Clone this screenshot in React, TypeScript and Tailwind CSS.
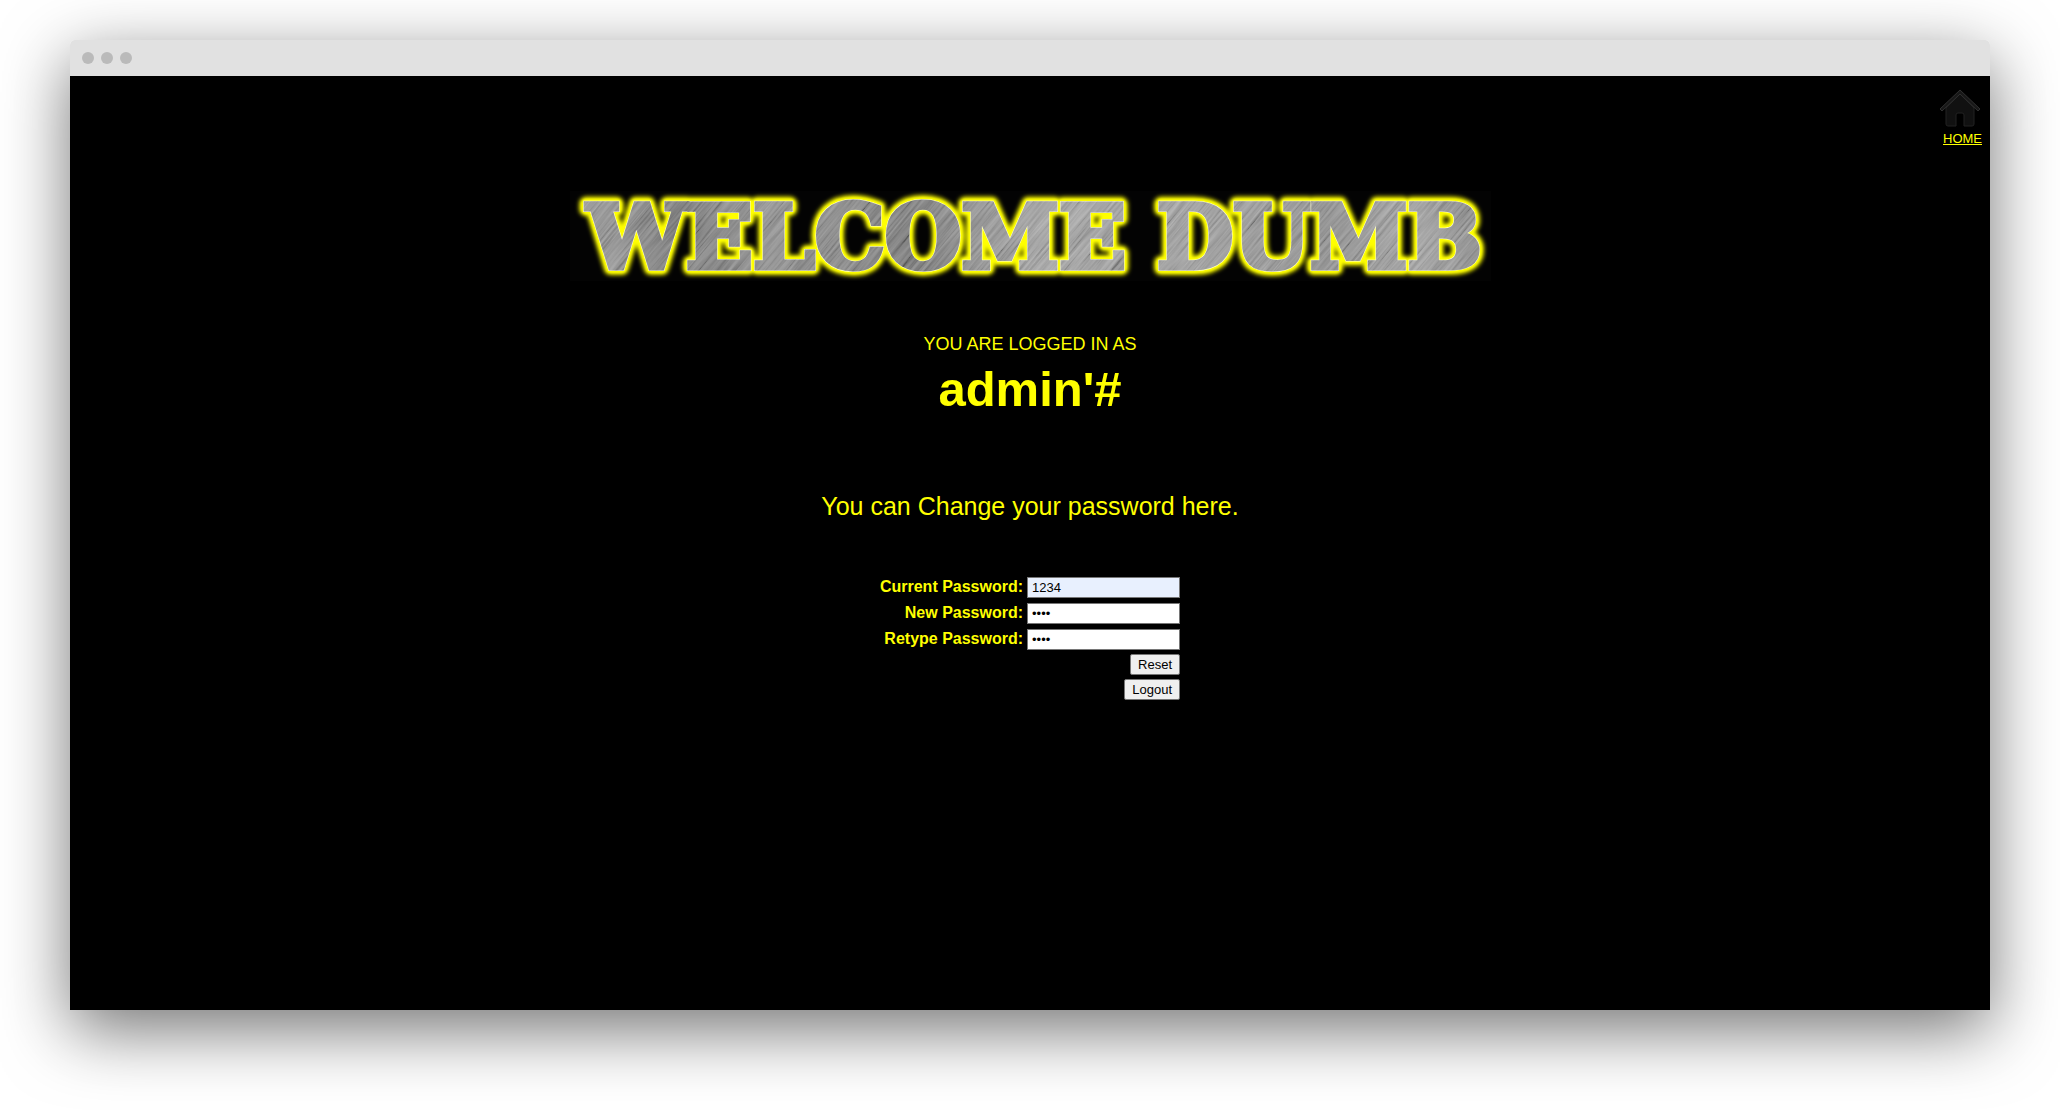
import React from "react";

const bannerFont = "font-['DejaVu_Serif'] text-[88px] leading-none font-bold";

function BannerWords() {
  return (
    <>
      <text x="17" y="77">WELCOME</text>
      <text x="587" y="77">DUMB</text>
    </>
  );
}

function Banner() {
  return (
    <h1 className="w-full max-w-[921px] bg-[#030303]">
      <svg viewBox="0 0 921 90" className={`block w-full overflow-visible ${bannerFont}`} role="img" aria-label="Welcome Dumb">
        <defs>
          <linearGradient id="steel" x1="0" y1="0" x2="1" y2="0">
            <stop offset="0" stopColor="#9a9a9a" />
            <stop offset="0.12" stopColor="#747474" />
            <stop offset="0.22" stopColor="#8c8c8c" />
            <stop offset="0.38" stopColor="#747474" />
            <stop offset="0.5" stopColor="#a2a2a2" />
            <stop offset="0.68" stopColor="#9c9c9c" />
            <stop offset="0.82" stopColor="#8a8a8a" />
            <stop offset="0.92" stopColor="#9e9e9e" />
            <stop offset="1" stopColor="#848484" />
          </linearGradient>
          <filter id="brushed" x="0" y="0" width="1" height="1">
            <feTurbulence type="fractalNoise" baseFrequency="0.015 0.45" numOctaves="3" seed="4" />
            <feColorMatrix values="1.6 0 0 0 -0.3  1.6 0 0 0 -0.3  1.6 0 0 0 -0.3  0 0 0 0 0.25" />
          </filter>
          <filter id="glowWide" x="-5%" y="-30%" width="110%" height="160%">
            <feGaussianBlur stdDeviation="2" />
          </filter>
          <filter id="glowCore" x="-5%" y="-30%" width="110%" height="160%">
            <feGaussianBlur stdDeviation="1" />
          </filter>
          <mask id="letters" maskUnits="userSpaceOnUse" x="0" y="0" width="921" height="90">
            <g fill="white" stroke="white" strokeWidth="5">
              <BannerWords />
            </g>
          </mask>
        </defs>
        <g aria-hidden="true" strokeLinejoin="round">
          <g fill="#ffff00" stroke="#ffff00" strokeWidth="14" filter="url(#glowWide)">
            <BannerWords />
          </g>
          <g fill="#ffff00" stroke="#ffff00" strokeWidth="9" filter="url(#glowCore)">
            <BannerWords />
          </g>
        </g>
        <g aria-hidden="true" fill="#ffffd0" stroke="#ffffd0" strokeWidth="6">
          <BannerWords />
        </g>
        <g mask="url(#letters)">
          <rect width="921" height="90" fill="url(#steel)" />
          <g transform="rotate(-50 460 45)">
            <rect x="-40" y="-420" width="1000" height="930" filter="url(#brushed)" />
          </g>
        </g>
      </svg>
    </h1>
  );
}

function HomeLink() {
  return (
    <a href="#" className="flex flex-col items-center text-[13px] leading-4 text-[#ffff00]">
      <svg viewBox="0 0 42 38" className="block w-[42px] h-[38px]" aria-hidden="true">
        <path d="M7 19 21 5l14 14v16q0 2-2 2h-8V26q0-2-2-2h-4q-2 0-2 2v11H9q-2 0-2-2Z" fill="#111111" stroke="#222222" />
        <path d="M1 20 21 1l20 19-2 2L21 5 3 22Z" fill="#181818" stroke="#303030" strokeLinejoin="round" />
      </svg>
      <span className="mt-1 ml-1.5 underline">HOME</span>
    </a>
  );
}

const fields = [
  { id: "current", label: "Current Password:", type: "text", tint: "bg-[#e8f0fe]" },
  { id: "new", label: "New Password:", type: "password", tint: "bg-white" },
  { id: "retype", label: "Retype Password:", type: "password", tint: "bg-white" },
];

const buttonClass =
  "block ml-auto h-[21px] rounded-[2px] border border-[#767676] bg-[#efefef] px-[7px] text-[13px] leading-4 text-black";

function PasswordForm() {
  return (
    <form onSubmit={(e) => e.preventDefault()}>
      <table className="border-collapse">
        <tbody>
          {fields.map((f) => (
            <tr key={f.id} className="h-[26px]">
              <th scope="row" className="p-0 pr-1 text-right text-base leading-5 font-bold">
                <label htmlFor={f.id}>{f.label}</label>
              </th>
              <td className="p-0">
                <input
                  id={f.id}
                  type={f.type}
                  defaultValue="1234"
                  className={`block h-[21px] w-[153px] border border-[#767676] px-1 text-[13px] leading-4 text-black outline-none ${f.tint}`}
                />
              </td>
            </tr>
          ))}
          <tr className="h-[25px]">
            <td colSpan={2} className="p-0">
              <button type="submit" className={buttonClass}>Reset</button>
            </td>
          </tr>
          <tr className="h-[25px]">
            <td colSpan={2} className="p-0">
              <button type="button" className={buttonClass}>Logout</button>
            </td>
          </tr>
        </tbody>
      </table>
    </form>
  );
}

export default function App() {
  return (
    <div className="flex min-h-screen flex-col bg-white px-[70px] pt-10 pb-[100px] font-['Liberation_Sans',sans-serif]">
      <div className="flex flex-1 flex-col overflow-hidden rounded-t-[5px] shadow-[0_20px_68px_rgba(0,0,0,0.55)]">
        <header className="flex h-9 items-center gap-[7px] bg-[#e1e1e1] px-3">
          <span className="size-3 rounded-full bg-[#bababa]" />
          <span className="size-3 rounded-full bg-[#bababa]" />
          <span className="size-3 rounded-full bg-[#bababa]" />
        </header>
        <div className="flex-1 bg-black">
          <div className="flex justify-end px-2 pt-[13px]">
            <HomeLink />
          </div>
          <main className="mt-11 flex flex-col items-center text-[#ffff00]">
            <Banner />
            <p className="mt-[51px] text-lg leading-6">YOU ARE LOGGED IN AS</p>
            <p className="mt-[5px] text-[49px] leading-[56px] font-bold">admin'#</p>
            <p className="mt-[73px] text-[25px] leading-8">You can Change your password here.</p>
            <div className="mt-[52px]">
              <PasswordForm />
            </div>
          </main>
        </div>
      </div>
    </div>
  );
}
